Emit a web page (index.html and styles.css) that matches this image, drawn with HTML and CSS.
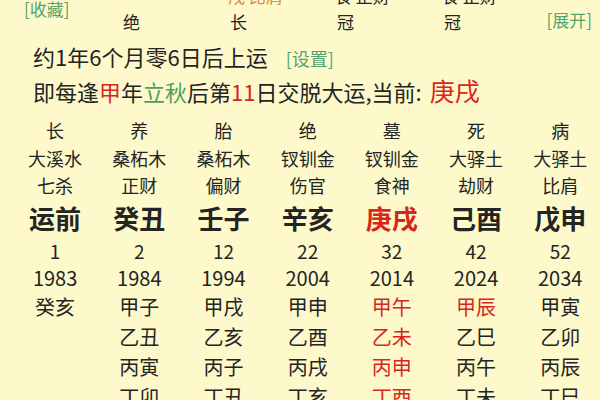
FILE: index.html
```html
<!DOCTYPE html>
<html lang="zh">
<head>
<meta charset="utf-8">
<link rel="stylesheet" href="styles.css">
</head>
<body>
<div class="page">
  <div class="header">
    <div class="fav link">[收藏]</div>
    <div class="cut orange">戌 比肩</div>
    <div class="cut">食 正财</div>
    <div class="cut">食 正财</div>
    <div class="hc">绝</div>
    <div class="hc">长</div>
    <div class="hc">冠</div>
    <div class="hc">冠</div>
    <div class="expand link">[展开]</div>
  </div>
  <div class="line l1">约1年6个月零6日后上运<span class="link set">[设置]</span></div>
  <div class="line l2">即每逢<span class="red">甲</span>年<span class="green">立秋</span>后第<span class="red">11</span>日交脱大运,当前:<span class="red big">庚戌</span></div>

  <div class="grid">
    <div class="c r1">长</div><div class="c r1">养</div><div class="c r1">胎</div><div class="c r1">绝</div><div class="c r1">墓</div><div class="c r1">死</div><div class="c r1">病</div>
    <div class="c r2">大溪水</div><div class="c r2">桑柘木</div><div class="c r2">桑柘木</div><div class="c r2">钗钏金</div><div class="c r2">钗钏金</div><div class="c r2">大驿土</div><div class="c r2">大驿土</div>
    <div class="c r3">七杀</div><div class="c r3">正财</div><div class="c r3">偏财</div><div class="c r3">伤官</div><div class="c r3">食神</div><div class="c r3">劫财</div><div class="c r3">比肩</div>
    <div class="c r4">运前</div><div class="c r4">癸丑</div><div class="c r4">壬子</div><div class="c r4">辛亥</div><div class="c r4 red">庚戌</div><div class="c r4">己酉</div><div class="c r4">戊申</div>
    <div class="c r5">1</div><div class="c r5">2</div><div class="c r5">12</div><div class="c r5">22</div><div class="c r5">32</div><div class="c r5">42</div><div class="c r5">52</div>
    <div class="c r6">1983</div><div class="c r6">1984</div><div class="c r6">1994</div><div class="c r6">2004</div><div class="c r6">2014</div><div class="c r6">2024</div><div class="c r6">2034</div>
    <div class="c list"><div>癸亥</div></div>
    <div class="c list"><div>甲子</div><div>乙丑</div><div>丙寅</div><div>丁卯</div></div>
    <div class="c list"><div>甲戌</div><div>乙亥</div><div>丙子</div><div>丁丑</div></div>
    <div class="c list"><div>甲申</div><div>乙酉</div><div>丙戌</div><div>丁亥</div></div>
    <div class="c list red"><div>甲午</div><div>乙未</div><div>丙申</div><div>丁酉</div></div>
    <div class="c list"><div class="red">甲辰</div><div>乙巳</div><div>丙午</div><div>丁未</div></div>
    <div class="c list"><div>甲寅</div><div>乙卯</div><div>丙辰</div><div>丁巳</div></div>
  </div>
</div>
</body>
</html>
```
FILE: styles.css
```css
html, body {
  margin: 0;
  padding: 0;
  background: #fdf9cb;
}
body {
  width: 600px;
  height: 400px;
  overflow: hidden;
  font-family: "Noto Sans CJK SC", "Noto Sans", sans-serif;
  color: #242424;
}
.page {
  width: 600px;
}
.link {
  color: #55a36f;
}
.red {
  color: #d8261d;
}
.green {
  color: #4f9d62;
}
.orange {
  color: #d89048;
}
.header {
  margin-top: -14px;
  display: grid;
  grid-template-columns: 78px repeat(4, 107px) 1fr;
  grid-template-rows: 20px 32px;
  font-size: 17px;
}
.fav {
  grid-column: 1;
  grid-row: 1 / 3;
  align-self: start;
  margin-top: 13px;
  padding-left: 24px;
  line-height: 20px;
  font-size: 17px;
}
.cut {
  grid-row: 1;
  line-height: 20px;
  padding-left: 43px;
  white-space: nowrap;
}
.cut:nth-child(2) { grid-column: 3; }
.cut:nth-child(3) { grid-column: 4; }
.cut:nth-child(4) { grid-column: 5; }
.hc {
  grid-row: 2;
  text-align: center;
  line-height: 32px;
}
.expand {
  grid-row: 2;
  grid-column: 6;
  text-align: right;
  padding-right: 8px;
  line-height: 28px;
}
.line {
  padding-left: 33px;
  font-size: 22px;
  white-space: nowrap;
}
.l1 {
  margin-top: 3px;
  line-height: 30px;
}
.set {
  font-size: 18px;
  margin-left: 18px;
}
.l2 {
  line-height: 34px;
}
.big {
  font-size: 25px;
  margin-left: 8px;
}
.grid {
  margin-top: 8px;
  padding-left: 13px;
  display: grid;
  grid-template-columns: repeat(7, 84.2px);
  grid-template-rows: 28px 28px 27px 38px 27px 28px auto;
}
.c {
  text-align: center;
  white-space: nowrap;
}
.r1, .r2, .r3 {
  font-size: 18px;
}
.r1 { line-height: 28px; }
.r2 { line-height: 28px; }
.r3 { line-height: 27px; }
.r4 {
  font-size: 26px;
  font-weight: 700;
  line-height: 38px;
}
.r5 {
  font-size: 19px;
  line-height: 27px;
}
.r6 {
  font-size: 20px;
  line-height: 28px;
}
.list {
  font-size: 20px;
  line-height: 30px;
}
.list.red div {
  color: #d8261d;
}
```
